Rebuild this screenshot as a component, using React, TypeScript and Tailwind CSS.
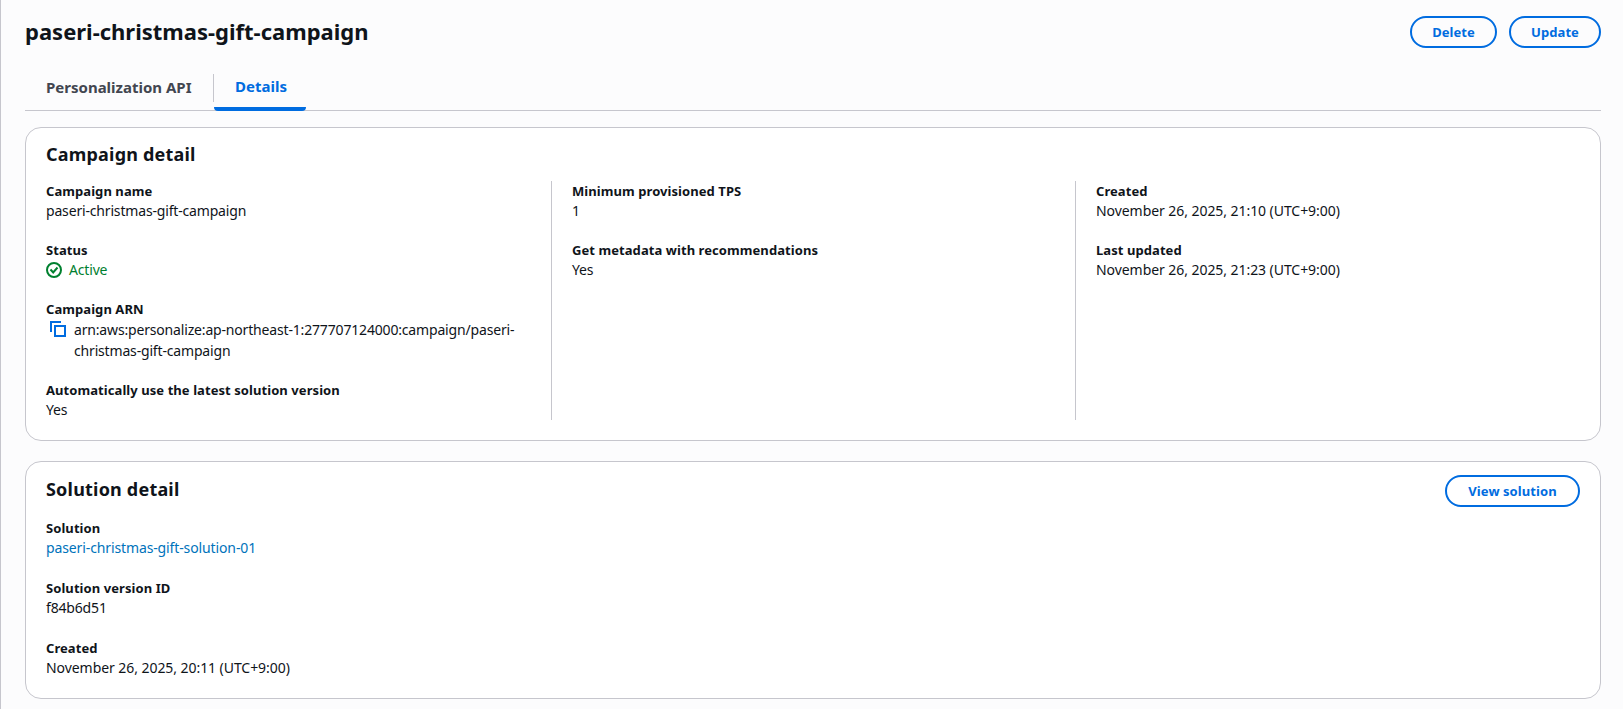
import type { ReactNode } from "react";

function Field({ label, children }: { label: string; children: ReactNode }) {
  return (
    <div>
      <div className="text-[13px] leading-5 font-bold tracking-[0.07px] text-[#0f141a]">{label}</div>
      <div className="leading-5 tracking-[-0.17px]">{children}</div>
    </div>
  );
}

function DateText({ children }: { children: ReactNode }) {
  return <span className="tracking-[-0.06px]">{children}</span>;
}

function OutlineButton({ label, className }: { label: string; className: string }) {
  return (
    <button className={`h-8 rounded-full border-2 border-[#006ce0] text-[13px] font-bold tracking-[0.07px] text-[#006ce0] ${className}`}>
      {label}
    </button>
  );
}

function StatusIcon() {
  return (
    <svg width="16" height="16" viewBox="0 0 16 16" fill="none" stroke="#00802f" strokeWidth="2">
      <circle cx="8" cy="8" r="7" />
      <path d="M4.5 7.5 7.2 10.5 11.5 5.5" />
    </svg>
  );
}

function CopyIcon() {
  return (
    <svg width="16" height="16" viewBox="0 0 16 16" fill="none" stroke="#006ce0" strokeWidth="2">
      <path d="M1 11V1h10" />
      <rect x="5" y="5" width="10" height="10" />
    </svg>
  );
}

export default function App() {
  return (
    <div className="min-h-[709px] border-l border-[#c6c6cd] bg-[#fcfcfd] pl-6 pr-[22px] text-sm text-[#0f141a] [font-family:'Noto_Sans',sans-serif]">
      <div className="flex items-start justify-between pt-4">
        <h1 className="text-[22px] leading-[30px] font-bold">paseri-christmas-gift-campaign</h1>
        <div className="flex gap-3">
          <OutlineButton label="Delete" className="w-[87px]" />
          <OutlineButton label="Update" className="w-[92px]" />
        </div>
      </div>

      <div className="mt-[15px] flex h-[48px] border-b border-[#c6c6cd]">
        <div className="flex items-center pt-[2px]">
          <div className="flex h-7 w-[189px] items-center border-r border-[#c6c6cd] pl-[21px] text-[15px] font-bold text-[#424650]">
            Personalization API
          </div>
        </div>
        <div className="flex h-[48px] w-[92px] items-center justify-center rounded-b-sm border-b-4 border-[#006ce0] pt-[4px] pl-[2px] text-[15px] font-bold text-[#006ce0]">
          Details
        </div>
      </div>

      <section className="mt-4 h-[314px] rounded-2xl border border-[#c6c6cd] bg-white px-5 pt-[12px]">
        <h2 className="text-[18px] leading-7 font-bold tracking-[0.2px]">Campaign detail</h2>
        <div className="mt-[13px] grid grid-cols-[505px_524px_1fr]">
          <div className="flex h-[239px] flex-col gap-[19px] pr-8">
            <Field label="Campaign name">paseri-christmas-gift-campaign</Field>
            <Field label="Status">
              <span className="flex items-center gap-[7px] text-[#00802f]">
                <StatusIcon />
                Active
              </span>
            </Field>
            <Field label="Campaign ARN">
              <div className="flex items-start gap-2">
                <span className="mt-[2px] ml-[4px] shrink-0">
                  <CopyIcon />
                </span>
                <span className="leading-[21px]">
                  arn:aws:personalize:ap-northeast-1:277707124000:campaign/paseri-christmas-gift-campaign
                </span>
              </div>
            </Field>
            <Field label="Automatically use the latest solution version">Yes</Field>
          </div>
          <div className="flex h-[239px] flex-col gap-[19px] border-l border-[#c6c6cd] pl-5">
            <Field label="Minimum provisioned TPS">1</Field>
            <Field label="Get metadata with recommendations">Yes</Field>
          </div>
          <div className="flex h-[239px] flex-col gap-[19px] border-l border-[#c6c6cd] pl-5">
            <Field label="Created">
              <DateText>November 26, 2025, 21:10 (UTC+9:00)</DateText>
            </Field>
            <Field label="Last updated">
              <DateText>November 26, 2025, 21:23 (UTC+9:00)</DateText>
            </Field>
          </div>
        </div>
      </section>

      <section className="mt-5 h-[238px] rounded-2xl border border-[#c6c6cd] bg-white px-5 pt-[13px]">
        <div className="flex items-start justify-between">
          <h2 className="text-[18px] leading-7 font-bold tracking-[0.2px]">Solution detail</h2>
          <OutlineButton label="View solution" className="w-[135px]" />
        </div>
        <div className="mt-[11px] flex flex-col gap-5">
          <Field label="Solution">
            <span className="tracking-[-0.12px] text-[#0073bb]">paseri-christmas-gift-solution-01</span>
          </Field>
          <Field label="Solution version ID">f84b6d51</Field>
          <Field label="Created">
            <DateText>November 26, 2025, 20:11 (UTC+9:00)</DateText>
          </Field>
        </div>
      </section>
    </div>
  );
}
